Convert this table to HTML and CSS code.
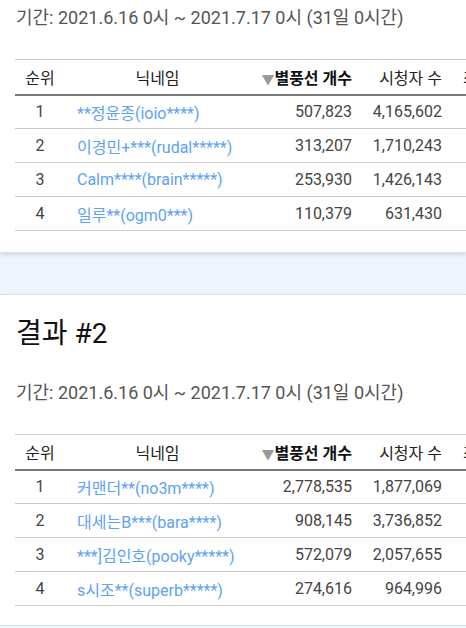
FILE: index.html
```html
<!DOCTYPE html>
<html lang="ko">
<head>
<meta charset="utf-8">
<link rel="stylesheet" href="styles.css">
</head>
<body>
<div class="page">
  <section class="card card-first">
    <p class="period">기간: 2021.6.16 0시 ~ 2021.7.17 0시 (31일 0시간)</p>
    <div class="table-wrap">
      <table class="rank">
        <thead>
          <tr>
            <th class="c-rank">순위</th>
            <th class="c-nick">닉네임</th>
            <th class="c-num c-balloon sorted"><span class="arrow">▼</span>별풍선 개수</th>
            <th class="c-num c-view">시청자 수</th>
            <th class="c-more">최고 시청자</th>
          </tr>
        </thead>
        <tbody>
          <tr><td class="c-rank">1</td><td class="c-nick"><a>**정윤종(ioio****)</a></td><td class="c-num">507,823</td><td class="c-num">4,165,602</td><td class="c-more"></td></tr>
          <tr><td class="c-rank">2</td><td class="c-nick"><a>이경민+***(rudal*****)</a></td><td class="c-num">313,207</td><td class="c-num">1,710,243</td><td class="c-more"></td></tr>
          <tr><td class="c-rank">3</td><td class="c-nick"><a>Calm****(brain*****)</a></td><td class="c-num">253,930</td><td class="c-num">1,426,143</td><td class="c-more"></td></tr>
          <tr><td class="c-rank">4</td><td class="c-nick"><a>일루**(ogm0***)</a></td><td class="c-num">110,379</td><td class="c-num">631,430</td><td class="c-more"></td></tr>
        </tbody>
      </table>
    </div>
  </section>
  <section class="card">
    <h2 class="title">결과 #2</h2>
    <p class="period">기간: 2021.6.16 0시 ~ 2021.7.17 0시 (31일 0시간)</p>
    <div class="table-wrap">
      <table class="rank">
        <thead>
          <tr>
            <th class="c-rank">순위</th>
            <th class="c-nick">닉네임</th>
            <th class="c-num c-balloon sorted"><span class="arrow">▼</span>별풍선 개수</th>
            <th class="c-num c-view">시청자 수</th>
            <th class="c-more">최고 시청자</th>
          </tr>
        </thead>
        <tbody>
          <tr><td class="c-rank">1</td><td class="c-nick"><a>커맨더**(no3m****)</a></td><td class="c-num">2,778,535</td><td class="c-num">1,877,069</td><td class="c-more"></td></tr>
          <tr><td class="c-rank">2</td><td class="c-nick"><a>대세는B***(bara****)</a></td><td class="c-num">908,145</td><td class="c-num">3,736,852</td><td class="c-more"></td></tr>
          <tr><td class="c-rank">3</td><td class="c-nick"><a>***]김인호(pooky*****)</a></td><td class="c-num">572,079</td><td class="c-num">2,057,655</td><td class="c-more"></td></tr>
          <tr><td class="c-rank">4</td><td class="c-nick"><a>s시조**(superb*****)</a></td><td class="c-num">274,616</td><td class="c-num">964,996</td><td class="c-more"></td></tr>
        </tbody>
      </table>
    </div>
  </section>
</div>
</body>
</html>
```

FILE: styles.css
```css
html, body {
  margin: 0;
  padding: 0;
}
body {
  background: #eef5fd;
  font-family: Roboto, "Noto Sans CJK KR", sans-serif;
  color: #444;
  overflow: hidden;
}
.page {
  display: flex;
  flex-direction: column;
  gap: 41px;
}
.card {
  background: #fff;
  border-top: 1px solid #dde1e6;
  border-bottom: 1px solid #dde1e6;
  box-shadow: 0 2px 4px rgba(0, 0, 0, 0.12);
  padding: 22px 0 19px 0;
  overflow: hidden;
}
.card-first {
  border-top: none;
  padding-top: 6px;
  padding-bottom: 21px;
}
.title {
  margin: 0 0 30px 16px;
  font-size: 28px;
  line-height: 34px;
  font-weight: 400;
  color: #111;
}
.period {
  margin: 0 0 29px 16px;
  font-size: 18px;
  line-height: 24px;
  color: #555;
  white-space: nowrap;
}
.table-wrap {
  margin-left: 15px;
  overflow: hidden;
}
.rank {
  border-collapse: collapse;
  table-layout: fixed;
  width: 545px;
  font-size: 16px;
  border-top: 1px solid #ccc;
}
.rank th, .rank td {
  box-sizing: border-box;
  white-space: nowrap;
  padding: 0 8px;
}
.rank th {
  font-weight: 400;
  color: #222;
  height: 35px;
  border-bottom: 2px solid #777;
}
.rank td {
  height: 34px;
  border-bottom: 1px solid #ccc;
}
.c-rank {
  width: 50px;
  text-align: center;
}
.c-nick {
  width: 185px;
  text-align: left;
}
.rank td.c-nick {
  padding-left: 12px;
}
.rank th.c-nick {
  text-align: center;
}
.c-num {
  text-align: right;
}
.c-balloon {
  width: 110px;
}
.c-view {
  width: 90px;
}
.c-more {
  width: 110px;
  text-align: left;
}
.rank th.c-more {
  padding-left: 13px;
}
.rank th.sorted {
  font-weight: 700;
  color: #111;
  padding-left: 0;
}
.arrow {
  color: #999;
  font-size: 13px;
  font-weight: 400;
}
.rank a {
  color: #5ea2f5;
  text-decoration: none;
}
```
